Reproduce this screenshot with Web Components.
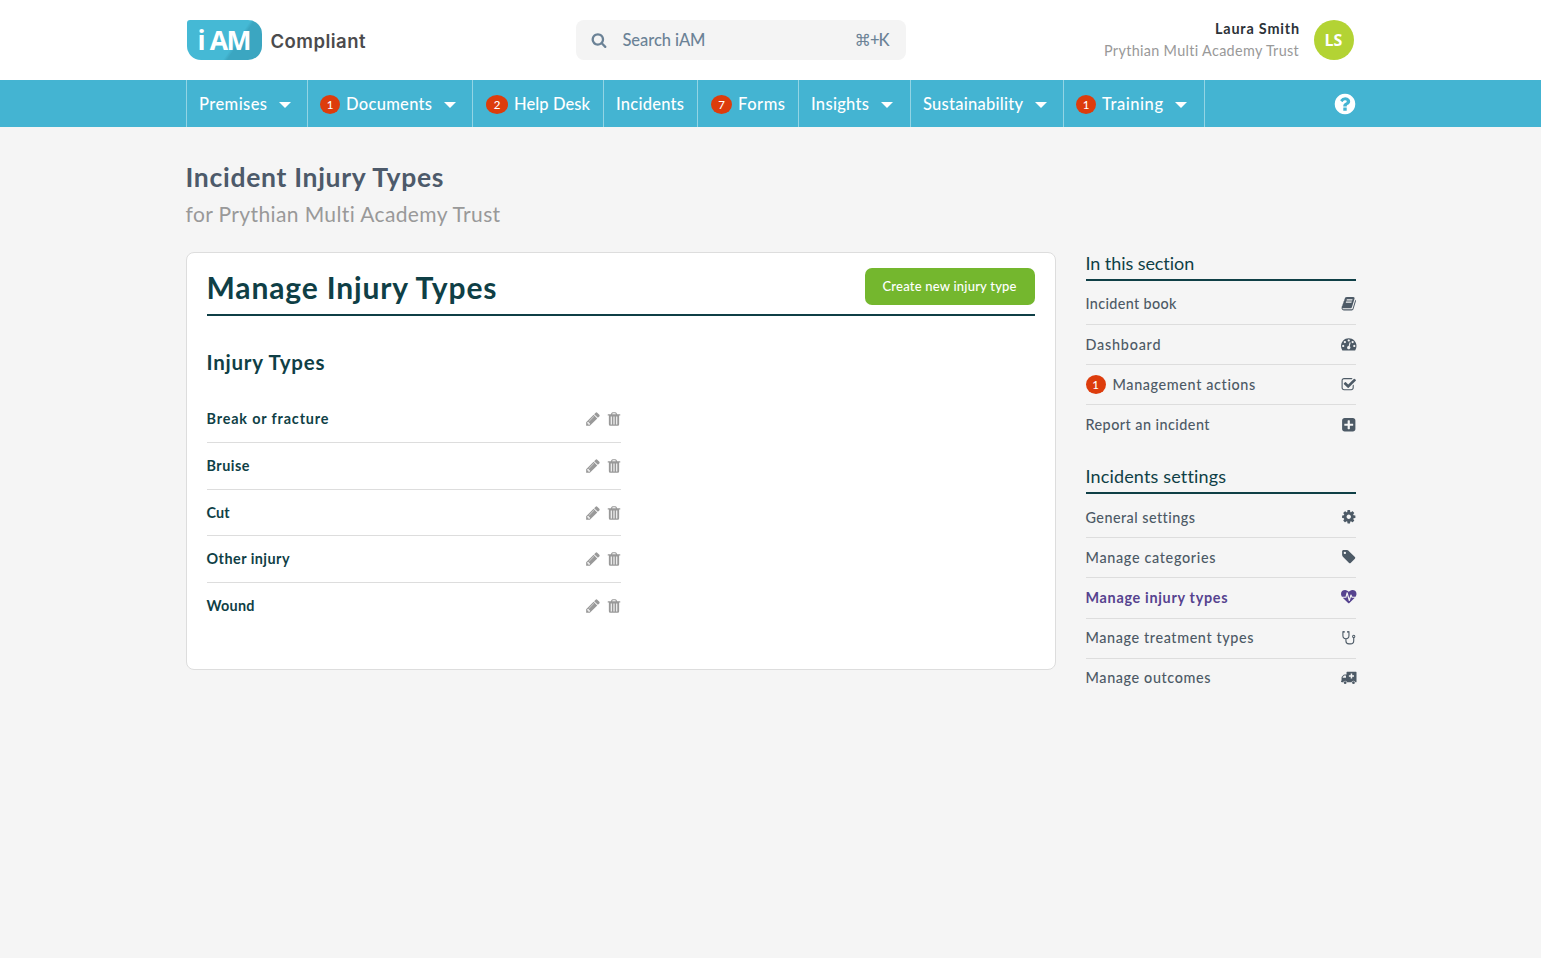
<!DOCTYPE html>
<html lang="en">
<head>
<meta charset="utf-8">
<title>Incident Injury Types</title>
<style>
  html, body { margin: 0; height: 100%; }
  body {
    background: #f5f5f5;
    color: #4d5a66;
    font-family: Lato, "Liberation Sans", sans-serif;
    font-size: 14.4px;
    overflow: hidden;
  }
</style>
</head>
<body>
<iam-app></iam-app>

<script>
const ICONS = {
  search: '<path d="M1216 832q0-185-131.5-316.5t-316.5-131.5-316.5 131.5-131.5 316.5 131.5 316.5 316.5 131.5 316.5-131.5 131.5-316.5zm512 832q0 52-38 90t-90 38q-54 0-90-38l-343-342q-179 124-399 124-143 0-273.5-55.5t-225-150-150-225-55.5-273.5 55.5-273.5 150-225 225-150 273.5-55.5 273.5 55.5 225 150 150 225 55.5 273.5q0 220-124 399l343 343q37 37 37 90z"/>',
  pencil: '<path d="M491 1536l91-91-235-235-91 91v107h128v128h107zm523-928q0-22-22-22-10 0-17 7l-542 542q-7 7-7 17 0 22 22 22 10 0 17-7l542-542q7-7 7-17zm-54-192l416 416-832 832h-416v-416zm683 96q0 53-37 90l-166 166-416-416 166-165q36-38 90-38 53 0 91 38l235 234q37 39 37 91z"/>',
  trash: '<path fill-rule="evenodd" d="M192 400q0-32 32-32h320l70-150q40-90 142-90h280q102 0 142 90l70 150h320q32 0 32 32v64q0 32-32 32h-96v984q0 184-160 184h-832q-160 0-160-184v-984h-96q-32 0-32-32zM684 368h424l-45-98q-9-14-27-14h-280q-18 0-27 14zM530 620v880h120v-880zM836 620v880h120v-880zM1142 620v880h120v-880z"/>',
  book: '<path d="M1703 478q40 57 18 129l-275 906q-19 64-76.5 107.5t-122.5 43.5h-923q-77 0-148.5-53.5t-99.5-131.5q-24-67-2-127 0-4 3-27t4-37q1-8-3-21.5t-3-19.5q2-11 8-21t16.5-23.5 16.5-23.5q23-38 45-91.5t30-91.5q3-10 .5-30t-.5-28q3-11 17-28t17-23q21-36 42-92t25-90q1-9-2.5-32t.5-28q4-13 22-30.5t22-22.5q19-26 42.5-84.5t27.5-96.5q1-8-3-25.5t-2-26.5q2-8 9-18t18-23 17-21q8-12 16.5-30.5t15-35 16-36 19.5-32 26.5-23.5 36-11.5 47.5 5.5l-1 3q38-9 51-9h761q74 0 114 56t18 130l-274 906q-36 119-71.5 153.5t-128.5 34.5h-869q-27 0-38 15-11 16-1 43 24 70 144 70h923q29 0 56-15.5t35-41.5l300-987q7-22 5-57 38 15 59 43zm-1064 2q-4 13 2 22.5t20 9.5h608q13 0 25.5-9.5t16.5-22.5l21-64q4-13-2-22.5t-20-9.5h-608q-13 0-25.5 9.5t-16.5 22.5zm-83 256q-4 13 2 22.5t20 9.5h608q13 0 25.5-9.5t16.5-22.5l21-64q4-13-2-22.5t-20-9.5h-608q-13 0-25.5 9.5t-16.5 22.5z"/>',
  gauge: '<path d="M384 1152q0-53-37.5-90.5t-90.5-37.5-90.5 37.5-37.5 90.5 37.5 90.5 90.5 37.5 90.5-37.5 37.5-90.5zm192-448q0-53-37.5-90.5t-90.5-37.5-90.5 37.5-37.5 90.5 37.5 90.5 90.5 37.5 90.5-37.5 37.5-90.5zm428 481l101-382q6-26-7.5-48.5t-38.5-29.5-48 6.5-30 39.5l-101 382q-60 5-107 43.5t-63 98.5q-20 77 20 146t117 89 146-20 89-117q16-60-6-117t-72-91zm660-33q0-53-37.5-90.5t-90.5-37.5-90.5 37.5-37.5 90.5 37.5 90.5 90.5 37.5 90.5-37.5 37.5-90.5zm-640-640q0-53-37.5-90.5t-90.5-37.5-90.5 37.5-37.5 90.5 37.5 90.5 90.5 37.5 90.5-37.5 37.5-90.5zm448 192q0-53-37.5-90.5t-90.5-37.5-90.5 37.5-37.5 90.5 37.5 90.5 90.5 37.5 90.5-37.5 37.5-90.5zm320 448q0 261-141 483-19 29-54 29h-1402q-35 0-54-29-141-221-141-483 0-182 71-348t191-286 286-191 348-71 348 71 286 191 191 286 71 348z"/>',
  check: '<path d="M1472 930v318q0 119-84.5 203.5t-203.5 84.5h-832q-119 0-203.5-84.5t-84.5-203.5v-832q0-119 84.5-203.5t203.5-84.5h832q63 0 117 25 15 7 18 23 3 17-9 29l-49 49q-10 10-23 10-3 0-9-2-23-6-45-6h-832q-66 0-113 47t-47 113v832q0 66 47 113t113 47h832q66 0 113-47t47-113v-254q0-13 9-22l64-64q10-10 23-10 6 0 12 3 20 8 20 29zm231-489l-814 814q-24 24-57 24t-57-24l-430-430q-24-24-24-57t24-57l110-110q24-24 57-24t57 24l263 263 647-647q24-24 57-24t57 24l110 110q24 24 24 57t-24 57z"/>',
  plus: '<path d="M1408 960v-128q0-26-19-45t-45-19h-320v-320q0-26-19-45t-45-19h-128q-26 0-45 19t-19 45v320h-320q-26 0-45 19t-19 45v128q0 26 19 45t45 19h320v320q0 26 19 45t45 19h128q26 0 45-19t19-45v-320h320q26 0 45-19t19-45zm256-544v960q0 119-84.5 203.5t-203.5 84.5h-960q-119 0-203.5-84.5t-84.5-203.5v-960q0-119 84.5-203.5t203.5-84.5h960q119 0 203.5 84.5t84.5 203.5z"/>',
  cog: '<path d="M1152 896q0-106-75-181t-181-75-181 75-75 181 75 181 181 75 181-75 75-181zm512-109v222q0 12-8 23t-20 13l-185 28q-19 54-39 91 35 50 107 138 10 12 10 25t-9 23q-27 37-99 108t-94 71q-12 0-26-9l-138-108q-44 23-91 38-16 136-29 186-7 28-36 28h-222q-14 0-24.5-8.5t-11.5-21.5l-28-184q-49-16-90-37l-141 107q-10 9-25 9-14 0-25-11-126-114-165-168-7-10-7-23 0-12 8-23 15-21 51-66.5t54-70.5q-27-50-41-99l-183-27q-13-2-21-12.5t-8-23.5v-222q0-12 8-23t19-13l186-28q14-46 39-92-40-57-107-138-10-12-10-24 0-10 9-23 26-36 98.5-107.5t94.5-71.5q13 0 26 10l138 107q44-23 91-38 16-136 29-186 7-28 36-28h222q14 0 24.5 8.5t11.5 21.5l28 184q49 16 90 37l142-107q9-9 24-9 13 0 25 10 129 119 165 170 7 8 7 22 0 12-8 23-15 21-51 66.5t-54 70.5q26 50 41 98l183 28q13 2 21 12.5t8 23.5z"/>',
  tag: '<path d="M576 448q0-53-37.5-90.5t-90.5-37.5-90.5 37.5-37.5 90.5 37.5 90.5 90.5 37.5 90.5-37.5 37.5-90.5zm1067 576q0 53-37 90l-491 492q-39 37-91 37-53 0-90-37l-715-716q-38-37-64.5-101t-26.5-117v-416q0-52 38-90t90-38h416q53 0 117 26.5t102 64.5l715 714q37 39 37 91z"/>',
  heartbeat: '<path d="M1280 896h305q-5 6-10 10.5t-9 7.5l-3 4-623 600q-18 18-44 18t-44-18l-624-602q-5-2-21-20h369q22 0 39.5-13.5t22.5-34.5l70-281 190 667q6 20 23 33t39 13q21 0 38-13t23-33l146-485 56 112q18 35 57 35zm512-428q0 145-103 300h-369l-111-221q-8-17-25.5-27t-36.5-8q-45 5-56 46l-129 430-196-686q-6-20-23.5-33t-39.5-13-39 13.5-22 34.5l-116 464h-423q-103-155-103-300 0-220 127-344t351-124q62 0 126.5 21.5t120 58 95.5 68.5 76 68q36-36 76-68t95.5-68.5 120-58 126.5-21.5q224 0 351 124t127 344z"/>',
  stethoscope: '<g fill="none" stroke="currentColor" stroke-width="128" stroke-linecap="round"><path d="M330 210H220v440q0 370 350 370t350-370V210H810M570 1020v240q0 340 350 340h160q390 0 390-340V900"/></g><circle cx="1470" cy="740" r="130" fill="none" stroke="currentColor" stroke-width="120"/><circle cx="340" cy="210" r="100"/><circle cx="800" cy="210" r="100"/>',
  ambulance: '<path fill-rule="evenodd" d="M704 192h1024q64 0 64 64v1104q0 64-64 64h-64a230 230 0 0 0-448 0H704a230 230 0 0 0-448 0H128q-128 0-128-96v-60q0-40 64-40V900q0-90 60-150l190-190q60-50 140-50h186V256q0-64 64-64zM192 896h384V640H400q-20 0-30 10L200 820q-8 8-8 20zM1120 400v208H912v176h208v208h176V784h208V608h-208V400z"/><circle cx="480" cy="1472" r="160"/><circle cx="1440" cy="1472" r="160"/>',
  question: '<path d="M1024 1376v-192q0-14-9-23t-23-9h-192q-14 0-23 9t-9 23v192q0 14 9 23t23 9h192q14 0 23-9t9-23zm256-672q0-88-55.5-163t-138.5-116-170-41q-243 0-371 213-15 24 8 42l132 100q7 6 19 6 16 0 25-12 53-68 86-92 34-24 86-24 48 0 85.5 26t37.5 59q0 38-20 61t-68 45q-63 28-115.5 86.5t-52.5 125.5v36q0 14 9 23t23 9h192q14 0 23-9t9-23q0-19 21.5-49.5t54.5-49.5q32-18 49-28.5t46-35 44.5-48 28-60.5 12.5-81zm384 192q0 209-103 385.5t-279.5 279.5-385.5 103-385.5-103-279.5-279.5-103-385.5 103-385.5 279.5-279.5 385.5-103 385.5 103 279.5 279.5 103 385.5z"/>'
}

class BaseElement extends HTMLElement {
  constructor() {
    super()
    this.attachShadow({ mode: 'open' })
  }

  connectedCallback() {
    this.shadowRoot.innerHTML = this.template()
  }
}

class IamIcon extends BaseElement {
  template() {
    return `
      <style>
        :host { display: block; flex: none; width: var(--size, 14px); height: var(--size, 14px); }
        svg { display: block; width: 100%; height: 100%; fill: currentColor; overflow: visible; }
      </style>
      <svg viewBox="0 0 1792 1792" aria-hidden="true">${ICONS[this.getAttribute('name')]}</svg>
    `
  }
}

// Text tracked out (or in) so that it fills the width it is given
class IamText extends BaseElement {
  template() {
    return `
      <style>
        :host { display: block; flex: none; white-space: nowrap; width: ${this.getAttribute('w')}px; }
        span { display: inline-block; }
      </style>
      <span><slot></slot></span>
    `
  }

  connectedCallback() {
    super.connectedCallback()
    const span = this.shadowRoot.querySelector('span')
    const gaps = this.textContent.trim().length - 1
    const spare = Number(this.getAttribute('w')) - span.getBoundingClientRect().width
    if (gaps > 0) span.style.letterSpacing = `${(spare / gaps).toFixed(3)}px`
  }
}

class IamBadge extends BaseElement {
  template() {
    return `
      <style>
        :host {
          display: flex; flex: none; align-items: center; justify-content: center;
          width: var(--badge-width, 20px); height: 19px; margin-right: 7px;
          border-radius: 50%; background: #dd3c0c; color: #fff;
          font-size: 11.5px; font-weight: 500; line-height: 19px;
        }
      </style>
      <slot></slot>
    `
  }
}

class IamLogo extends BaseElement {
  template() {
    return `
      <style>
        :host { display: flex; align-items: center; gap: 9px; margin-left: 1px; }
        .mark {
          display: flex; align-items: center; box-sizing: border-box;
          width: 75px; height: 40px; padding-left: 11px;
          border-radius: 3px 14px 14px 14px;
          background: linear-gradient(125deg, #45b9d5 0 62%, #3ba6c1 66% 100%);
          color: #fff; font: 700 26.5px/40px "Open Sans", sans-serif;
        }
        .name { padding-top: 1px; color: #4b4b4d; font: 600 18.5px/40px Inter, sans-serif; }
      </style>
      <div class="mark"><iam-text w="54">i AM</iam-text></div>
      <div class="name"><iam-text w="95">Compliant</iam-text></div>
    `
  }
}

class IamSearch extends BaseElement {
  template() {
    return `
      <style>
        :host {
          display: flex; align-items: center; box-sizing: border-box;
          width: 330px; height: 40px; padding: 0 16px 0 15px;
          border-radius: 8px; background: #f4f4f4;
          color: #6b8296; font-size: 16.5px; font-weight: 500;
        }
        iam-icon { --size: 16px; margin-right: 16px; }
        .keys { margin-left: auto; font-family: Lato, "DejaVu Sans", sans-serif; }
      </style>
      <iam-icon name="search"></iam-icon>
      <iam-text w="83">Search iAM</iam-text>
      <iam-text class="keys" w="35">⌘+K</iam-text>
    `
  }
}

class IamUser extends BaseElement {
  template() {
    return `
      <style>
        :host { display: flex; align-items: center; gap: 14.5px; margin-right: 2px; }
        .who { display: flex; flex-direction: column; align-items: flex-end; line-height: 22px; padding-bottom: 1px; }
        .name { color: #2c3238; font-weight: 700; }
        .org { color: #999; }
        .avatar {
          display: flex; align-items: center; justify-content: center;
          width: 40px; height: 40px; border-radius: 50%;
          background: #b3d334; color: #fff; font: 700 16px "Open Sans", sans-serif;
        }
      </style>
      <div class="who">
        <iam-text class="name" w="84">Laura Smith</iam-text>
        <iam-text class="org" w="195">Prythian Multi Academy Trust</iam-text>
      </div>
      <div class="avatar">LS</div>
    `
  }
}

class IamHeader extends BaseElement {
  template() {
    return `
      <style>
        :host { display: block; background: #fff; }
        .inner {
          display: grid; grid-template-columns: 390px 330px 450px; align-items: center;
          width: 1170px; height: 80px; margin: 0 auto;
        }
        iam-user { justify-self: end; }
      </style>
      <div class="inner">
        <iam-logo></iam-logo>
        <iam-search></iam-search>
        <iam-user></iam-user>
      </div>
    `
  }
}

class IamNavItem extends BaseElement {
  template() {
    return `
      <style>
        :host {
          display: flex; align-items: center; box-sizing: border-box;
          height: 47px; padding: 2px 0 0 12.5px; border-right: 1px solid #93d4e4;
          line-height: 45px;
        }
        .caret {
          margin-left: 11.5px;
          border: 6px solid transparent; border-top-color: #fff; border-bottom: 0;
        }
      </style>
      <slot></slot>
      ${this.hasAttribute('menu') ? '<i class="caret"></i>' : ''}
    `
  }
}

class IamNav extends BaseElement {
  template() {
    // [label, label width, item width, menu, badge, badge width]
    const items = [
      ['Premises', 68, 121, true],
      ['Documents', 86, 165, true, 1, 20],
      ['Help Desk', 76, 131, false, 2, 22],
      ['Incidents', 68, 94, false],
      ['Forms', 47, 101, false, 7, 21],
      ['Insights', 58, 112, true],
      ['Sustainability', 100, 153, true],
      ['Training', 61, 141, true, 1, 20]
    ]
    return `
      <style>
        :host { display: block; background: #44b4d2; color: #fff; font-size: 16.5px; font-weight: 500; }
        nav {
          display: flex; align-items: center; box-sizing: border-box;
          width: 1170px; height: 47px; margin: 0 auto; border-left: 1px solid #93d4e4;
        }
        .help { --size: 24px; margin-left: auto; margin-right: -1px; }
      </style>
      <nav>
        ${items.map(([label, w, width, menu, badge, bw]) => `
          <iam-nav-item style="width:${width}px" ${menu ? 'menu' : ''}>
            ${badge ? `<iam-badge style="--badge-width:${bw}px;margin-left:${bw === 20 ? 0 : 1}px;margin-right:6px">${badge}</iam-badge>` : ''}
            <iam-text w="${w}">${label}</iam-text>
          </iam-nav-item>`).join('')}
        <iam-icon class="help" name="question"></iam-icon>
      </nav>
    `
  }
}

class IamInjuryList extends BaseElement {
  template() {
    const rows = [
      ['Break or fracture', 122],
      ['Bruise', 43],
      ['Cut', 23],
      ['Other injury', 83],
      ['Wound', 48]
    ]
    return `
      <style>
        :host { display: block; width: 414px; font-weight: 700; color: #0f3f46; }
        .row {
          display: flex; align-items: center; box-sizing: border-box; height: 46.6px;
          border-bottom: 1px solid #ddd;
        }
        .row:last-child { border-bottom-color: transparent; }
        .row > iam-text { padding-bottom: 1px; }
        .actions { display: flex; gap: 6px; margin-left: auto; color: #999; }
        .actions iam-icon { --size: 16px; margin-right: -1px; }
      </style>
      ${rows.map(([name, w]) => `
        <div class="row">
          <iam-text w="${w}">${name}</iam-text>
          <div class="actions">
            <iam-icon name="pencil"></iam-icon>
            <iam-icon name="trash"></iam-icon>
          </div>
        </div>`).join('')}
    `
  }
}

class IamCard extends BaseElement {
  template() {
    return `
      <style>
        :host {
          display: block; box-sizing: border-box; height: 418px; padding: 15px 20px 0;
          border: 1px solid #ddd; border-radius: 8px; background: #fff; color: #0f3f46;
        }
        header {
          display: flex; justify-content: space-between; box-sizing: border-box;
          height: 48px; border-bottom: 2px solid #0f3f46;
        }
        h2 { margin: 0; font-size: 30px; line-height: 39px; }
        h3 { margin: 31px 0 19.7px; font-size: 20.5px; line-height: 30px; }
        button {
          display: flex; align-items: center; justify-content: center;
          width: 170px; height: 37px; padding: 0 0 1px; border: 0; border-radius: 7px;
          background: #74b72e; color: #fff; font: 500 13px Lato, sans-serif;
        }
      </style>
      <header>
        <h2><iam-text w="290">Manage Injury Types</iam-text></h2>
        <button><iam-text w="134">Create new injury type</iam-text></button>
      </header>
      <h3><iam-text w="118">Injury Types</iam-text></h3>
      <iam-injury-list></iam-injury-list>
    `
  }
}

class IamSideLink extends BaseElement {
  template() {
    return `
      <style>
        :host {
          display: flex; align-items: center; box-sizing: border-box; height: 40.2px;
          padding-bottom: 1px; border-bottom: 1px solid #ddd; font-weight: 500;
        }
        :host(:last-of-type) { border-bottom-color: transparent; }
        :host([active]) { color: #56438f; font-weight: 700; }
        iam-icon { --size: 15.5px; margin-left: auto; margin-right: -0.5px; }
      </style>
      <slot></slot>
      <iam-icon name="${this.getAttribute('icon')}"></iam-icon>
    `
  }
}

class IamSideSection extends BaseElement {
  template() {
    return `
      <style>
        :host { display: block; }
        .title {
          box-sizing: border-box; height: 29px; margin-bottom: 3.8px;
          border-bottom: 2px solid #0f3f46; color: #0f3f46; font-size: 18px; line-height: 23.6px;
        }
      </style>
      <div class="title"><slot name="title"></slot></div>
      <slot></slot>
    `
  }
}

class IamSidebar extends BaseElement {
  template() {
    return `
      <style>
        :host { display: flex; flex-direction: column; gap: 19.6px; width: 270px; }
      </style>
      <iam-side-section>
        <iam-text slot="title" w="109">In this section</iam-text>
        <iam-side-link icon="book"><iam-text w="91">Incident book</iam-text></iam-side-link>
        <iam-side-link icon="gauge"><iam-text w="75">Dashboard</iam-text></iam-side-link>
        <iam-side-link icon="check"><iam-badge>1</iam-badge><iam-text w="143">Management actions</iam-text></iam-side-link>
        <iam-side-link icon="plus"><iam-text w="124">Report an incident</iam-text></iam-side-link>
      </iam-side-section>
      <iam-side-section>
        <iam-text slot="title" w="140">Incidents settings</iam-text>
        <iam-side-link icon="cog"><iam-text w="109">General settings</iam-text></iam-side-link>
        <iam-side-link icon="tag"><iam-text w="130">Manage categories</iam-text></iam-side-link>
        <iam-side-link icon="heartbeat" active><iam-text w="142">Manage injury types</iam-text></iam-side-link>
        <iam-side-link icon="stethoscope"><iam-text w="168">Manage treatment types</iam-text></iam-side-link>
        <iam-side-link icon="ambulance"><iam-text w="125">Manage outcomes</iam-text></iam-side-link>
      </iam-side-section>
    `
  }
}

class IamApp extends BaseElement {
  template() {
    return `
      <style>
        :host { display: block; }
        main { width: 1170px; margin: 0 auto; padding-top: 33px; }
        h1 { margin: 0; font-size: 26.5px; line-height: 34px; color: #4d5a6a; }
        .sub { height: 58px; color: #999; font-size: 21px; line-height: 40px; }
        .columns { display: grid; grid-template-columns: 870px 270px; gap: 30px; align-items: start; }
      </style>
      <iam-header></iam-header>
      <iam-nav></iam-nav>
      <main>
        <h1><iam-text w="258">Incident Injury Types</iam-text></h1>
        <div class="sub"><iam-text w="315">for Prythian Multi Academy Trust</iam-text></div>
        <div class="columns">
          <iam-card></iam-card>
          <iam-sidebar></iam-sidebar>
        </div>
      </main>
    `
  }
}

customElements.define('iam-app', IamApp)
customElements.define('iam-header', IamHeader)
customElements.define('iam-logo', IamLogo)
customElements.define('iam-search', IamSearch)
customElements.define('iam-user', IamUser)
customElements.define('iam-nav', IamNav)
customElements.define('iam-nav-item', IamNavItem)
customElements.define('iam-badge', IamBadge)
customElements.define('iam-card', IamCard)
customElements.define('iam-injury-list', IamInjuryList)
customElements.define('iam-sidebar', IamSidebar)
customElements.define('iam-side-section', IamSideSection)
customElements.define('iam-side-link', IamSideLink)
customElements.define('iam-icon', IamIcon)
// last, so that every label is in its final place when it is measured
customElements.define('iam-text', IamText)
</script>
</body>
</html>
